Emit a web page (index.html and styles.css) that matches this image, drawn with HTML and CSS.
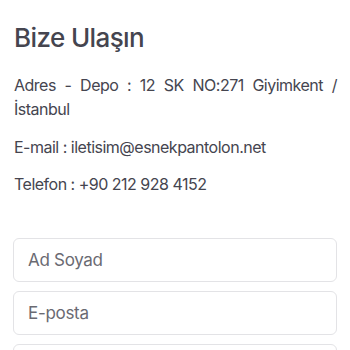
FILE: index.html
```html
<!DOCTYPE html>
<html lang="tr">
<head>
    <meta charset="UTF-8">
    <meta name="viewport" content="width=device-width, initial-scale=1.0">
    <title>Bize Ulaşın</title>
    <link rel="stylesheet" href="styles.css">
</head>
<body>

<div class="contact-page">
    <h2>Bize Ulaşın</h2>

    <!-- Contact info -->
    <p class="info address">Adres - Depo : 12 SK NO:271 Giyimkent / İstanbul</p>
    <p class="info">E-mail : iletisim@esnekpantolon.net</p>
    <p class="info">Telefon : +90 212 928 4152</p>

    <!-- Contact form -->
    <form class="contact-form">
        <input type="text" placeholder="Ad Soyad">
        <input type="email" placeholder="E-posta">
        <input type="text" placeholder="Konu">
    </form>
</div>

</body>
</html>
```

FILE: styles.css
```css
body {
    font-family: 'Inter', sans-serif;
    margin: 0;
    padding: 0;
    background-color: white;
    color: #45454f;
}

.contact-page {
    padding: 22px 13px 0 13px;
}

h2 {
    font-size: 26px;
    font-weight: 500;
    letter-spacing: -0.6px;
    margin: 0 0 20px 1px;
    color: #45454f;
}

.info {
    font-size: 16px;
    line-height: 24px;
    letter-spacing: -0.5px;
    margin: 0 0 13px 1px;
}

.address {
    text-align: justify;
    margin-bottom: 14px;
}

.contact-form {
    margin-top: 42px;
    display: flex;
    flex-direction: column;
    gap: 9px;
}

.contact-form input {
    height: 44px;
    box-sizing: border-box;
    border: 1px solid #e3e3e6;
    border-radius: 6px;
    padding: 0 14px;
    font-family: 'Inter', sans-serif;
    font-size: 17px;
    letter-spacing: -0.3px;
    color: #555;
}

.contact-form input::placeholder {
    color: #6a6a72;
}
```
